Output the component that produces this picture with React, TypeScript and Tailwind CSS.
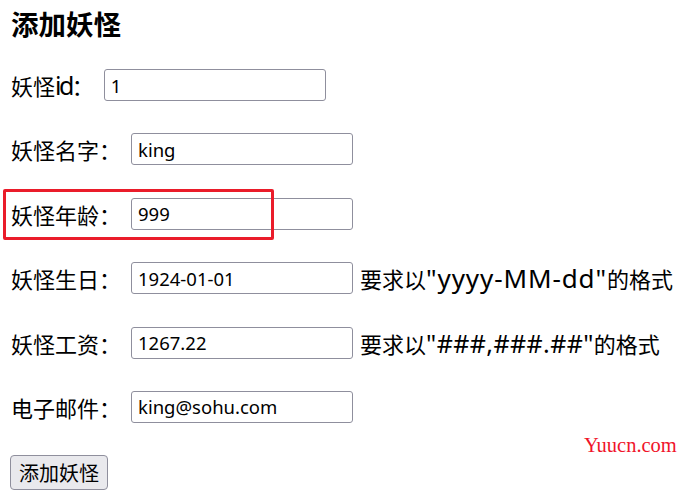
import React from "react";

const cjk = "font-['Noto_Sans_CJK_SC',sans-serif]";
const lat = "font-['Noto_Sans','Noto_Sans_CJK_SC',sans-serif]";

function Row({ label, value, note }: { label: React.ReactNode; value: string; note?: React.ReactNode }) {
  return (
    <div className="flex items-center h-[32px]">
      <span className={`text-[22px] leading-[32px] text-black whitespace-nowrap ${cjk}`}>{label}</span>
      <input
        readOnly
        value={value}
        className="ml-[10px] h-[32px] w-[222px] rounded-[3px] border border-[#8f8f9d] bg-white px-[6px] text-[18.5px] text-black font-['Noto_Sans',sans-serif] outline-none"
      />
      {note && (
        <span className={`ml-[7px] text-[22px] leading-[32px] text-black whitespace-nowrap ${cjk}`}>{note}</span>
      )}
    </div>
  );
}

export default function App() {
  return (
    <div className="relative w-[689px] h-[500px] bg-white overflow-hidden">
      <div className="flex flex-col pl-[11px]">
        <h1 className={`pt-[7px] text-[27.5px] leading-[33px] font-bold text-black ${cjk}`}>添加妖怪</h1>
        <div className="mt-[29px] flex flex-col gap-[32.4px]">
          <Row
            label={
              <>
                妖怪<span className={`text-[25px] leading-[32px] tracking-[-2.5px] ${lat}`}>id</span>：
              </>
            }
            value="1"
          />
          <Row label="妖怪名字：" value="king" />
          <Row label="妖怪年龄：" value="999" />
          <Row
            label="妖怪生日："
            value="1924-01-01"
            note={
              <>
                要求以<span className={`text-[26px] leading-[32px] tracking-[0.9px] ${lat}`}>"yyyy-MM-dd"</span>的格式
              </>
            }
          />
          <Row
            label="妖怪工资："
            value="1267.22"
            note={
              <>
                要求以<span className={`text-[25px] leading-[32px] tracking-[0.4px] ${lat}`}>"###,###.##"</span>的格式
              </>
            }
          />
          <Row label="电子邮件：" value="king@sohu.com" />
          <div>
            <button className={`-ml-[1px] h-[35px] w-[98px] rounded-[4px] border border-[#8f8f9d] bg-[#e9e9ed] text-[20px] text-black ${cjk}`}>
              添加妖怪
            </button>
          </div>
        </div>
      </div>
      <div className="absolute left-[3px] top-[189px] w-[271px] h-[51px] border-[3px] border-[#ea1c2a] rounded-[2px]" />
      <div className="absolute left-[584px] top-[430px] text-[20.5px] text-[#f0142a] font-['Liberation_Serif',serif]">
        Yuucn.com
      </div>
    </div>
  );
}
